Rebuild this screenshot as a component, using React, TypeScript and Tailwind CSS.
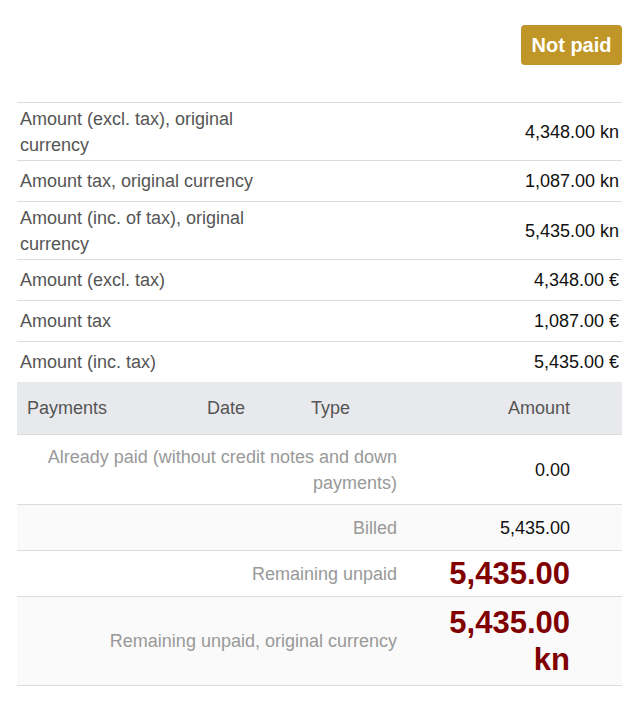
export default function App() {
  const rows: [string, string, boolean][] = [
    ["Amount (excl. tax), original currency", "4,348.00 kn", true],
    ["Amount tax, original currency", "1,087.00 kn", false],
    ["Amount (inc. of tax), original currency", "5,435.00 kn", true],
    ["Amount (excl. tax)", "4,348.00 €", false],
    ["Amount tax", "1,087.00 €", false],
    ["Amount (inc. tax)", "5,435.00 €", false],
  ];
  return (
    <div className="w-[644px] h-[706px] bg-white text-[18px] leading-[26px]" style={{ fontFamily: '"Liberation Sans", Arial, sans-serif' }}>
      <div className="flex justify-end pt-[25px] pr-[22px]">
        <div className="h-[40px] w-[101px] rounded-[4px] bg-[#c09628] text-white font-bold text-[20px] flex items-center justify-center">Not paid</div>
      </div>
      <div className="mx-[17px] mt-[37px] border-t border-[#dcdcdc] w-[605px]">
        {rows.map(([l, v, two]) => (
          <div key={l} className={`flex items-center border-b border-[#dcdcdc] px-[3px] ${two ? "h-[58px]" : "h-[41px]"}`}>
            <div className="w-[250px] text-[#555]">{l}</div>
            <div className="flex-1 text-right text-[#111]">{v}</div>
          </div>
        ))}
        <div className="flex items-center h-[53px] bg-[#e8e9ed] border-b border-[#dcdcdc] text-[#555] -mt-px">
          <div className="w-[180px] pl-[10px]">Payments</div>
          <div className="w-[104px] pl-[10px]">Date</div>
          <div className="w-[106px] pl-[10px]">Type</div>
          <div className="w-[173px] text-right pr-[10px]">Amount</div>
        </div>
        <div className="flex items-center h-[70px] border-b border-[#dcdcdc]">
          <div className="w-[390px] px-[10px] text-right text-[#999]">Already paid (without credit notes and down payments)</div>
          <div className="w-[173px] text-right pr-[10px] text-[#111]">0.00</div>
        </div>
        <div className="flex items-center h-[46px] border-b border-[#dcdcdc] bg-[#fafafa]">
          <div className="w-[390px] px-[10px] text-right text-[#999]">Billed</div>
          <div className="w-[173px] text-right pr-[10px] text-[#111]">5,435.00</div>
        </div>
        <div className="flex items-center h-[46px] border-b border-[#dcdcdc]">
          <div className="w-[390px] px-[10px] text-right text-[#999]">Remaining unpaid</div>
          <div className="w-[173px] text-right pr-[10px] text-[#800000] font-bold text-[31px] leading-[36px]">5,435.00</div>
        </div>
        <div className="flex items-center h-[89px] border-b border-[#dcdcdc] bg-[#fafafa]">
          <div className="w-[390px] px-[10px] text-right text-[#999]">Remaining unpaid, original currency</div>
          <div className="w-[173px] text-right pr-[10px] text-[#800000] font-bold text-[31px] leading-[37px]">5,435.00 kn</div>
        </div>
      </div>
    </div>
  );
}
